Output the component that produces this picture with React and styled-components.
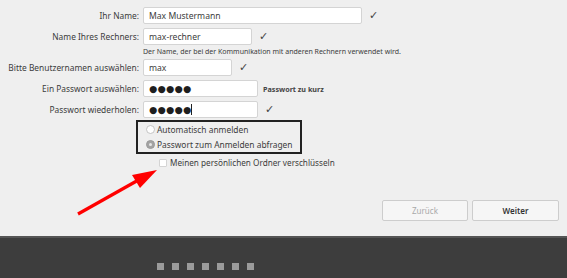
import styled, { createGlobalStyle } from "styled-components";

const GlobalStyle = createGlobalStyle`
  html, body {
    margin: 0;
    padding: 0;
    background: #efefef;
  }
  body {
    font-family: "Noto Sans", "DejaVu Sans", sans-serif;
    color: #3c3c3c;
  }
`;

const fields = [
  { label: "Ihr Name:", value: "Max Mustermann", width: 219, status: "ok" },
  { label: "Name Ihres Rechners:", value: "max-rechner", width: 109, status: "ok" },
  { label: "Bitte Benutzernamen auswählen:", value: "max", width: 89, status: "ok" },
  { label: "Ein Passwort auswählen:", value: "●●●●●", width: 115, status: "Passwort zu kurz", secret: true },
  { label: "Passwort wiederholen:", value: "●●●●●", width: 115, status: "ok", secret: true, focused: true },
];

const App = () => {
  return (
    <>
      <GlobalStyle />
      <Page>
        <Main>
          <Form>
            {fields.map((f, i) => (
              <div key={f.label}>
                <Row>
                  <Label>{f.label}</Label>
                  <Field $width={f.width} $secret={f.secret}>
                    {f.value}
                    {f.focused && <Caret />}
                  </Field>
                  {f.status === "ok" ? (
                    <Mark>✓</Mark>
                  ) : (
                    <Warning>{f.status}</Warning>
                  )}
                </Row>
                {i === 1 && (
                  <Hint>
                    Der Name, der bei der Kommunikation mit anderen Rechnern
                    verwendet wird.
                  </Hint>
                )}
              </div>
            ))}
          </Form>

          <LoginBox>
            <Option>
              <Radio />
              Automatisch anmelden
            </Option>
            <Option>
              <Radio $checked />
              Passwort zum Anmelden abfragen
            </Option>
          </LoginBox>

          <CheckRow>
            <Checkbox />
            Meinen persönlichen Ordner verschlüsseln
          </CheckRow>

          <Buttons>
            <Button disabled>Zurück</Button>
            <Button $primary>Weiter</Button>
          </Buttons>

          <Arrow width="567" height="236" viewBox="0 0 567 236">
            <line x1="78" y1="214" x2="142" y2="178" stroke="#ff0000" strokeWidth="3.2" />
            <polygon points="157,170 132,175 140,188" fill="#ff0000" />
          </Arrow>
        </Main>

        <Footer>
          {Array.from({ length: 7 }).map((_, i) => (
            <Step key={i} />
          ))}
        </Footer>
      </Page>
    </>
  );
};

export default App;

const Page = styled.div`
  width: 567px;
  height: 278px;
  display: flex;
  flex-direction: column;
  overflow: hidden;
`;

const Main = styled.div`
  position: relative;
  height: 236px;
  padding-top: 7px;
  box-sizing: border-box;
`;

const Arrow = styled.svg`
  position: absolute;
  left: 0;
  top: 0;
  pointer-events: none;
`;

const Form = styled.div`
  display: flex;
  flex-direction: column;
  gap: 4px;
`;

const Row = styled.div`
  display: flex;
  align-items: center;
  height: 17px;
`;

const Label = styled.div`
  width: 139px;
  margin-right: 4px;
  text-align: right;
  font-size: 8.4px;
  white-space: nowrap;
`;

const Field = styled.div`
  width: ${(p) => p.$width}px;
  height: 17px;
  box-sizing: border-box;
  background: #ffffff;
  border: 1px solid #d4d4d4;
  border-radius: 2px;
  padding-left: 5px;
  display: flex;
  align-items: center;
  font-size: ${(p) => (p.$secret ? "9.4px" : "8.6px")};
  letter-spacing: ${(p) => (p.$secret ? "0.3px" : "0")};
  font-family: ${(p) => (p.$secret ? '"DejaVu Sans", sans-serif' : "inherit")};
  color: ${(p) => (p.$secret ? "#1e1e1e" : "#3c3c3c")};
`;

const Caret = styled.span`
  display: inline-block;
  width: 1px;
  height: 11px;
  background: #222;
`;

const Mark = styled.span`
  margin-left: 7px;
  font-size: 11px;
  line-height: 11px;
  color: #444;
  font-family: "DejaVu Sans", sans-serif;
`;

const Warning = styled.span`
  margin-left: 5px;
  font-size: 7.2px;
  font-weight: bold;
  color: #444;
`;

const Hint = styled.div`
  margin: 2px 0 -2px 143px;
  font-size: 7px;
  line-height: 10px;
  color: #3c3c3c;
  white-space: nowrap;
`;

const LoginBox = styled.div`
  margin: 2px 0 0 136px;
  width: 166px;
  height: 34px;
  box-sizing: border-box;
  border: 2px solid #222;
  padding: 0 0 0 8px;
  display: flex;
  flex-direction: column;
  justify-content: center;
`;

const Option = styled.div`
  display: flex;
  align-items: center;
  gap: 2px;
  height: 15px;
  font-size: 8.4px;
  white-space: nowrap;
`;

const Radio = styled.span`
  width: 9px;
  height: 9px;
  box-sizing: border-box;
  border-radius: 50%;
  border: 1px solid ${(p) => (p.$checked ? "#9a9a9a" : "#c4c4c4")};
  background: ${(p) => (p.$checked ? "#a3a3a3" : "#ffffff")};
  display: flex;
  align-items: center;
  justify-content: center;
  &::after {
    content: "";
    display: ${(p) => (p.$checked ? "block" : "none")};
    width: 3px;
    height: 3px;
    border-radius: 50%;
    background: #e6e6e6;
  }
`;

const CheckRow = styled.div`
  margin: 4px 0 0 159px;
  display: flex;
  align-items: center;
  gap: 3px;
  height: 9px;
  font-size: 8.2px;
  white-space: nowrap;
`;

const Checkbox = styled.span`
  width: 8px;
  height: 8px;
  background: #ffffff;
  border: 1px solid #d4d4d4;
  border-radius: 1px;
  box-sizing: border-box;
`;

const Buttons = styled.div`
  margin: 33px 0 0 382px;
  display: flex;
  gap: 4px;
`;

const Button = styled.button`
  width: ${(p) => (p.$primary ? "87px" : "86px")};
  height: 21px;
  box-sizing: border-box;
  border: 1px solid #cdcdcd;
  border-radius: 2px;
  background: #f6f6f6;
  font-family: "Noto Sans", sans-serif;
  font-size: 8px;
  font-weight: ${(p) => (p.$primary ? 600 : 400)};
  color: ${(p) => (p.$primary ? "#333" : "#a9a9a9")};
  padding: 0;
`;

const Footer = styled.div`
  flex: 1;
  background: #3d3d3d;
  border-top: 2px solid #555;
  display: flex;
  align-items: flex-start;
  gap: 8px;
  padding: 25px 0 0 157px;
  box-sizing: border-box;
`;

const Step = styled.span`
  width: 7px;
  height: 7px;
  background: #9b9b9b;
`;
